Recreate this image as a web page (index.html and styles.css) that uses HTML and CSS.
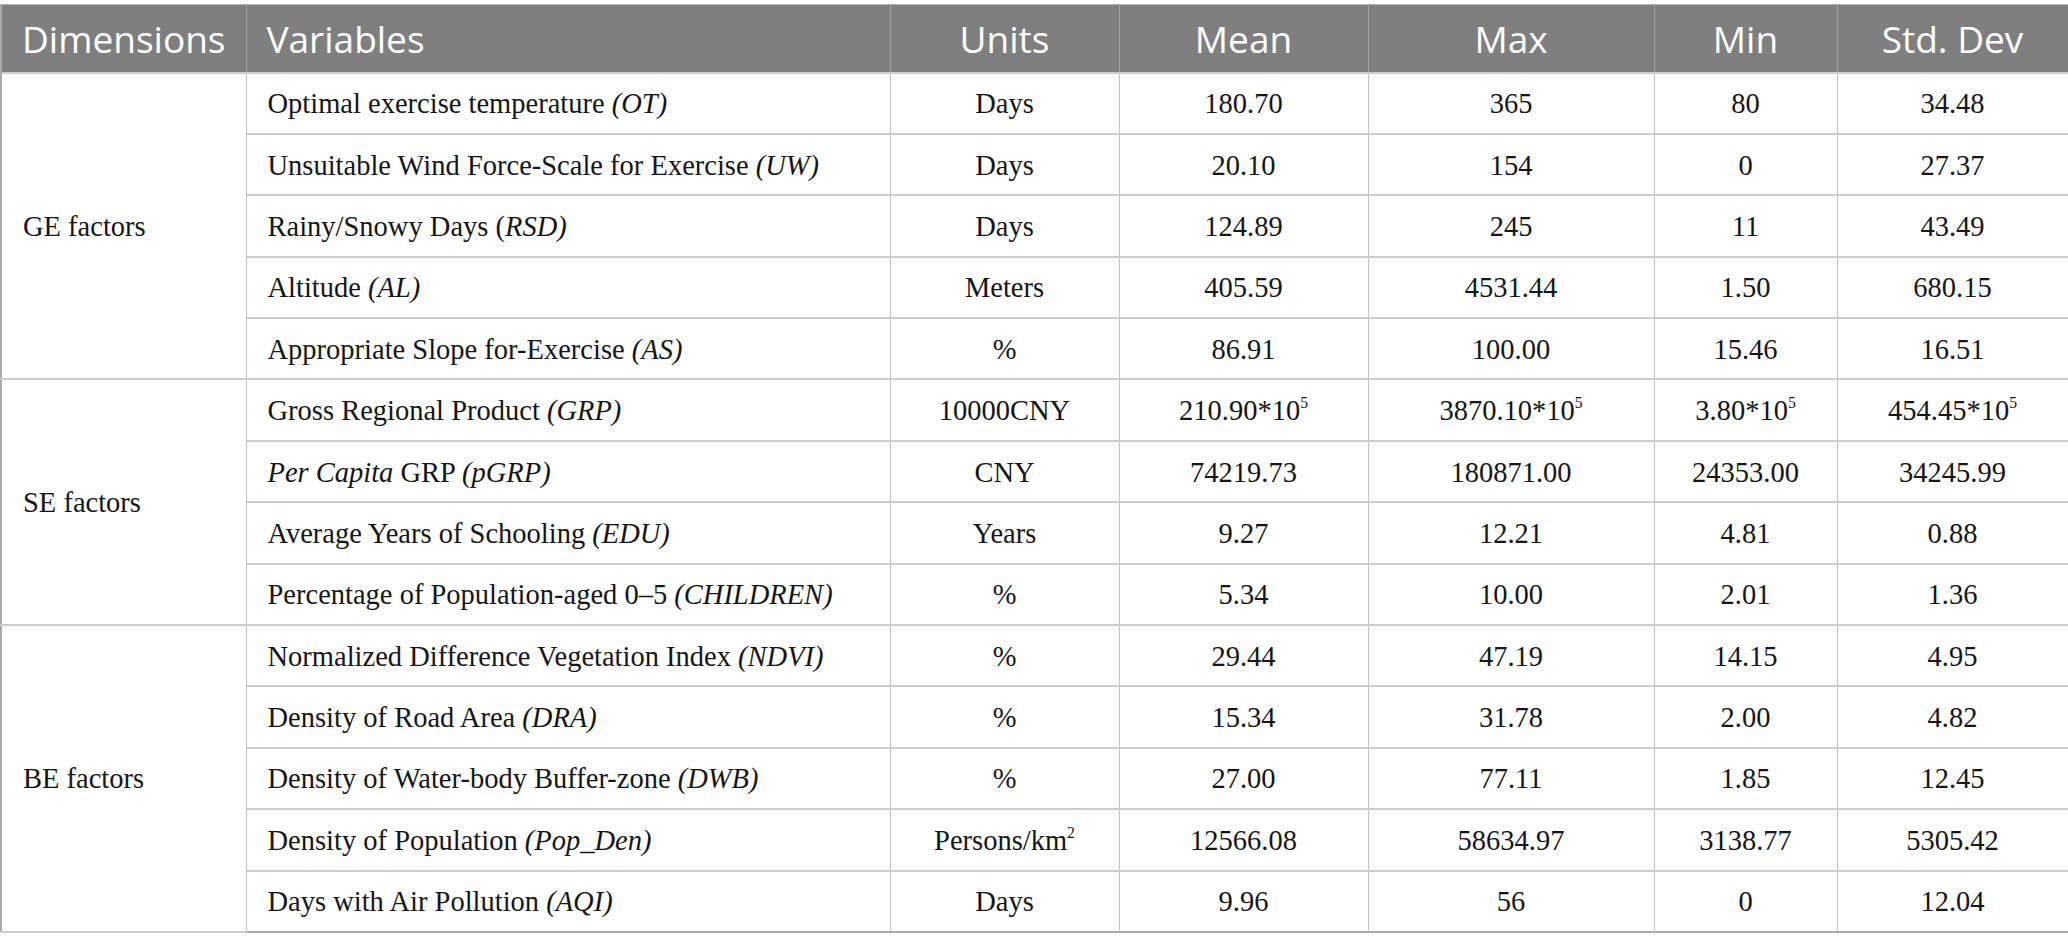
FILE: index.html
```html
<!DOCTYPE html>
<html lang="en">
<head>
<meta charset="utf-8">
<title>Descriptive statistics</title>
<link rel="stylesheet" href="styles.css">
</head>
<body>
<table class="stats">
  <colgroup>
    <col class="c-dim">
    <col class="c-var">
    <col class="c-unit">
    <col class="c-mean">
    <col class="c-max">
    <col class="c-min">
    <col class="c-sd">
  </colgroup>
  <thead>
    <tr class="head">
      <th class="left">Dimensions</th>
      <th class="left">Variables</th>
      <th>Units</th>
      <th>Mean</th>
      <th>Max</th>
      <th>Min</th>
      <th>Std. Dev</th>
    </tr>
  </thead>
  <tbody>
    <tr>
      <td class="dim" rowspan="5">GE factors</td>
      <td class="var">Optimal exercise temperature <i>(OT)</i></td>
      <td>Days</td><td>180.70</td><td>365</td><td>80</td><td>34.48</td>
    </tr>
    <tr>
      <td class="var">Unsuitable Wind Force-Scale for Exercise <i>(UW)</i></td>
      <td>Days</td><td>20.10</td><td>154</td><td>0</td><td>27.37</td>
    </tr>
    <tr>
      <td class="var">Rainy/Snowy Days (<i>RSD)</i></td>
      <td>Days</td><td>124.89</td><td>245</td><td>11</td><td>43.49</td>
    </tr>
    <tr>
      <td class="var">Altitude <i>(AL)</i></td>
      <td>Meters</td><td>405.59</td><td>4531.44</td><td>1.50</td><td>680.15</td>
    </tr>
    <tr class="grp-end">
      <td class="var">Appropriate Slope for-Exercise <i>(AS)</i></td>
      <td>%</td><td>86.91</td><td>100.00</td><td>15.46</td><td>16.51</td>
    </tr>
    <tr>
      <td class="dim" rowspan="4">SE factors</td>
      <td class="var">Gross Regional Product <i>(GRP)</i></td>
      <td>10000CNY</td><td>210.90*10<sup>5</sup></td><td>3870.10*10<sup>5</sup></td><td>3.80*10<sup>5</sup></td><td>454.45*10<sup>5</sup></td>
    </tr>
    <tr>
      <td class="var"><i>Per Capita</i> GRP <i>(pGRP)</i></td>
      <td>CNY</td><td>74219.73</td><td>180871.00</td><td>24353.00</td><td>34245.99</td>
    </tr>
    <tr>
      <td class="var">Average Years of Schooling <i>(EDU)</i></td>
      <td>Years</td><td>9.27</td><td>12.21</td><td>4.81</td><td>0.88</td>
    </tr>
    <tr class="grp-end">
      <td class="var">Percentage of Population-aged 0–5 <i>(CHILDREN)</i></td>
      <td>%</td><td>5.34</td><td>10.00</td><td>2.01</td><td>1.36</td>
    </tr>
    <tr>
      <td class="dim" rowspan="5">BE factors</td>
      <td class="var">Normalized Difference Vegetation Index <i>(NDVI)</i></td>
      <td>%</td><td>29.44</td><td>47.19</td><td>14.15</td><td>4.95</td>
    </tr>
    <tr>
      <td class="var">Density of Road Area <i>(DRA)</i></td>
      <td>%</td><td>15.34</td><td>31.78</td><td>2.00</td><td>4.82</td>
    </tr>
    <tr>
      <td class="var">Density of Water-body Buffer-zone <i>(DWB)</i></td>
      <td>%</td><td>27.00</td><td>77.11</td><td>1.85</td><td>12.45</td>
    </tr>
    <tr>
      <td class="var">Density of Population <i>(Pop_Den)</i></td>
      <td>Persons/km<sup>2</sup></td><td>12566.08</td><td>58634.97</td><td>3138.77</td><td>5305.42</td>
    </tr>
    <tr class="last">
      <td class="var">Days with Air Pollution <i>(AQI)</i></td>
      <td>Days</td><td>9.96</td><td>56</td><td>0</td><td>12.04</td>
    </tr>
  </tbody>
</table>
</body>
</html>
```

FILE: styles.css
```css
html, body {
  margin: 0;
  padding: 0;
  background: #ffffff;
}

body {
  padding-top: 4px;
}

.stats {
  width: 2067px;
  table-layout: fixed;
  border-collapse: collapse;
  border-left: 2px solid #ababab;
  border-right: 1px solid #ababab;
  border-top: 1px solid #b4b4b4;
  border-bottom: 2px solid #aaaaaa;
  font-family: "Liberation Serif", "Times New Roman", serif;
  font-size: 28.5px;
  color: #161616;
}

.c-dim { width: 245px; }
.c-var { width: 644px; }
.c-unit { width: 229px; }
.c-mean { width: 249px; }
.c-max { width: 286px; }
.c-min { width: 183px; }
.c-sd { width: 231px; }

.head {
  height: 68px;
  background: #7f7f7f;
}

.head th {
  font-family: "Open Sans", "Noto Sans", sans-serif;
  font-weight: 400;
  font-size: 37px;
  color: #ffffff;
  text-align: center;
  padding: 0 10px;
  border-left: 1px solid #a2a2a2;
  border-right: 1px solid #a2a2a2;
  border-top: 1px solid #b4b4b4;
  white-space: nowrap;
}

.head th.left {
  text-align: left;
  padding-left: 20px;
}

tbody tr {
  height: 61.4px;
}

tbody td {
  text-align: center;
  vertical-align: middle;
  padding: 2px 8px 0;
  border: 1px solid #c2c2c2;
  border-top: 2px solid #cccccc;
  border-bottom: 2px solid #cccccc;
  white-space: nowrap;
}

tbody td.var {
  text-align: left;
  padding-left: 21px;
}

tbody td.dim {
  text-align: left;
  padding-left: 21px;
  border-left: 2px solid #ababab;
}

tbody tr.last td {
  border-bottom: 2px solid #aaaaaa;
}

sup {
  font-size: 0.55em;
  line-height: 0;
  vertical-align: 0.75em;
}

i {
  font-style: italic;
}
```
